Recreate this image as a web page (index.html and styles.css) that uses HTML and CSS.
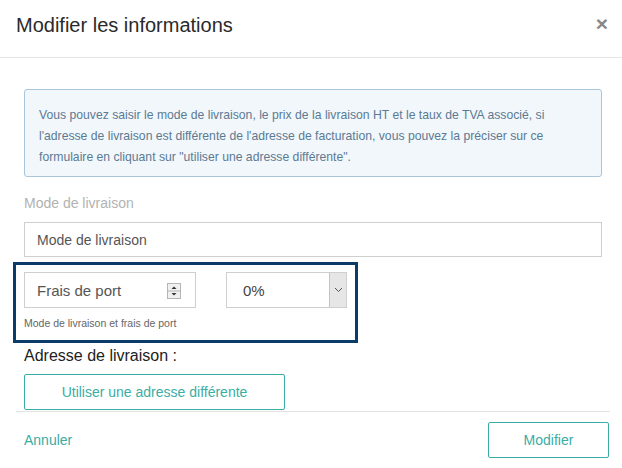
FILE: index.html
```html
<!DOCTYPE html>
<html lang="fr">
<head>
<meta charset="utf-8">
<title>Modifier les informations</title>
<link rel="stylesheet" href="styles.css">
</head>
<body>
<div class="modal">
  <div class="modal-header">
    <h1 class="modal-title">Modifier les informations</h1>
    <span class="close">×</span>
  </div>
  <div class="modal-body">
    <div class="info">Vous pouvez saisir le mode de livraison, le prix de la livraison HT et le taux de TVA associé, si l'adresse de livraison est différente de l'adresse de facturation, vous pouvez la préciser sur ce formulaire en cliquant sur "utiliser une adresse différente".</div>
    <div class="label">Mode de livraison</div>
    <div class="input">Mode de livraison</div>
    <div class="highlight">
      <div class="row">
        <div class="input number">
          <span>Frais de port</span>
          <svg class="spin" width="14" height="16" viewBox="0 0 14 16">
            <rect x="0.5" y="0.5" width="13" height="15" fill="#f0f0f0" stroke="#b5b5b5"/>
            <line x1="1" y1="8" x2="13" y2="8" stroke="#b5b5b5"/>
            <path d="M4.5 6 L7 3.5 L9.5 6 Z" fill="#333"/>
            <path d="M4.5 10 L7 12.5 L9.5 10 Z" fill="#333"/>
          </svg>
        </div>
        <div class="select">
          <span class="select-value">0%</span>
          <span class="select-arrow">
            <svg width="9" height="6" viewBox="0 0 9 6"><path d="M1 1 L4.5 4.5 L8 1" fill="none" stroke="#555" stroke-width="1"/></svg>
          </span>
        </div>
      </div>
      <div class="help">Mode de livraison et frais de port</div>
    </div>
    <div class="section-title">Adresse de livraison :</div>
    <div class="btn btn-wide">Utiliser une adresse différente</div>
  </div>
  <div class="modal-footer">
    <span class="link">Annuler</span>
    <span class="btn btn-submit">Modifier</span>
  </div>
</div>
</body>
</html>
```

FILE: styles.css
```css
* { box-sizing: border-box; }
html, body { margin: 0; padding: 0; background: #fff; }
body { font-family: "Liberation Sans", Arial, sans-serif; width: 622px; height: 468px; overflow: hidden; }

.modal-header {
  height: 58px;
  border-bottom: 1px solid #e5e5e5;
  display: flex;
  align-items: flex-start;
  justify-content: space-between;
  padding: 13px 14px 0 16px;
}
.modal-title { margin: 0; font-size: 20px; font-weight: normal; color: #2a2a2a; line-height: 24px; }
.close { font-size: 21px; font-weight: bold; color: #888; line-height: 20px; margin-top: 1px; }

.modal-body { padding: 31px 20px 0 24px; }

.info {
  height: 88px;
  background: #f2f7fb;
  border: 1px solid #a9c5d9;
  border-radius: 3px;
  padding: 15px 15px 8px 14px;
  color: #5b7a93;
  font-size: 12.2px;
  line-height: 21px;
}

.label { margin-top: 16px; font-size: 14px; line-height: 20px; color: #b2b2b2; }

.input {
  margin-top: 9px;
  height: 35px;
  border: 1px solid #cfcfcf;
  padding: 0 12px;
  display: flex;
  align-items: center;
  font-size: 14px;
  color: #555;
}

.highlight {
  margin: 5px 0 0 -11px;
  width: 345px;
  height: 81px;
  border: 3px solid #0b3b68;
  padding: 7px 8px 0 8px;
}
.row { display: flex; justify-content: space-between; }
.input.number {
  margin-top: 0;
  width: 172px;
  height: 36px;
  justify-content: space-between;
  padding: 0 14px 0 12px;
  font-size: 15px;
  color: #555;
}
.spin { display: block; margin-top: 1px; }
.select {
  width: 121px;
  height: 36px;
  border: 1px solid #cfcfcf;
  display: flex;
  font-size: 15px;
  color: #444;
}
.select-value { flex: 1; display: flex; align-items: center; padding-left: 16px; }
.select-arrow {
  width: 17px;
  background: #e6e6e6;
  border-left: 1px solid #c4c4c4;
  display: flex;
  align-items: center;
  justify-content: center;
}
.help { margin-top: 8px; font-size: 10.5px; color: #666; line-height: 14px; }

.section-title { margin-top: 3px; font-size: 16px; color: #222; line-height: 20px; }

.btn {
  display: flex;
  align-items: center;
  justify-content: center;
  border: 1px solid #3aada5;
  border-radius: 2px;
  color: #3aada5;
  font-size: 14px;
}
.btn-wide { margin-top: 8px; width: 261px; height: 36px; }

.modal-footer {
  margin: 1px 12px 0 16px;
  border-top: 1px solid #e3e3e3;
  padding: 10px 1px 0 8px;
  display: flex;
  justify-content: space-between;
  align-items: center;
}
.link { color: #3aada5; font-size: 14px; }
.btn-submit { width: 121px; height: 36px; }
```
